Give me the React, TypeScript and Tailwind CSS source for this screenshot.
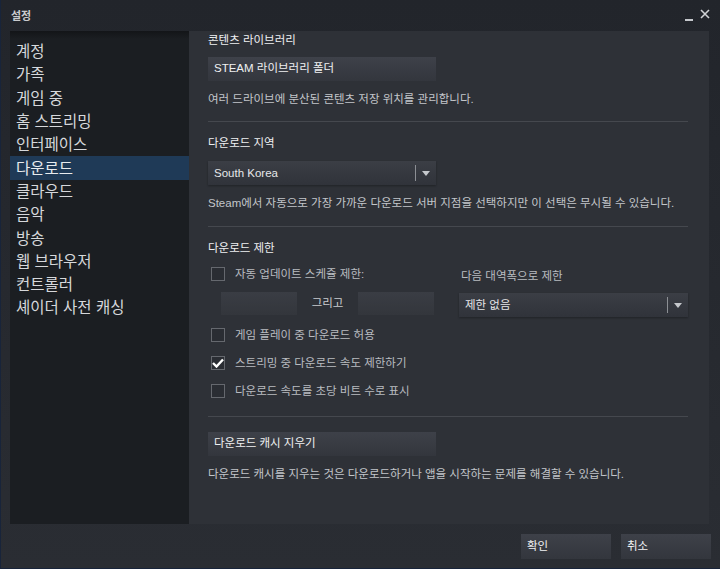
import React from "react";

const FONT = { fontFamily: '"Liberation Sans", "Noto Sans CJK KR", sans-serif' };

const navItems = [
  "계정",
  "가족",
  "게임 중",
  "홈 스트리밍",
  "인터페이스",
  "다운로드",
  "클라우드",
  "음악",
  "방송",
  "웹 브라우저",
  "컨트롤러",
  "셰이더 사전 캐싱",
];

function Arrow() {
  return (
    <svg width="8" height="5" viewBox="0 0 8 5" className="block">
      <path d="M0 0 L8 0 L4 5 Z" fill="#c5c8cc" />
    </svg>
  );
}

function Dropdown({ label, width }: { label: string; width: string }) {
  return (
    <div className={`${width} h-[24px] flex items-center bg-gradient-to-b from-[#3b3e45] to-[#30333a] shadow-[0_1px_2px_rgba(0,0,0,0.3)]`}>
      <span className="flex-1 pl-[6px] text-[11.5px] text-[#e6e7e9] leading-[24px]">{label}</span>
      <div className="w-px h-[16px] bg-[#8c8f94]" />
      <div className="w-[20px] flex justify-center">
        <Arrow />
      </div>
    </div>
  );
}

function Checkbox({ checked, label }: { checked?: boolean; label: string }) {
  return (
    <div className="flex items-center h-[18px] pl-[3px]">
      <div className="w-[14px] h-[14px] shrink-0 border border-[#65686e] bg-[#2a2d33] flex items-center justify-center">
        {checked && (
          <svg width="12" height="10" viewBox="0 0 12 10">
            <path d="M1 5 L4.5 8.5 L11 1.5" stroke="#ffffff" strokeWidth="2.4" fill="none" />
          </svg>
        )}
      </div>
      <span className="ml-[10px] text-[11.5px] text-[#b9bcc0] leading-[18px] whitespace-nowrap">{label}</span>
    </div>
  );
}

function Btn({ label, className = "" }: { label: string; className?: string }) {
  return (
    <div className={`h-[24px] flex items-center pl-[6px] bg-gradient-to-b from-[#3e4149] to-[#33363d] text-[11.5px] text-[#f0f1f2] ${className}`}>
      {label}
    </div>
  );
}

export default function App() {
  return (
    <div
      style={FONT}
      className="w-[720px] h-[569px] flex flex-col bg-gradient-to-b from-[#22252b] to-[#2a2d33] border-l border-b border-[#18243a] overflow-hidden"
    >
      {/* title bar */}
      <div className="h-[31px] flex items-center pl-[10px] pr-[10px] shrink-0">
        <span className="text-[11px] font-bold text-[#c9cbce] leading-[14px]">설정</span>
        <div className="flex-1" />
        <div className="flex items-center gap-[7px]">
          <div className="w-[8px] h-[2px] bg-[#c5c8cc] mt-[8px]" />
          <svg width="10" height="10" viewBox="0 0 10 10" className="-mt-[3px]">
            <path d="M1 1 L9 9 M9 1 L1 9" stroke="#d0d2d5" strokeWidth="1.6" />
          </svg>
        </div>
      </div>

      {/* main */}
      <div className="h-[493px] flex pl-[9px] pr-[11px] shrink-0">
        {/* sidebar */}
        <div className="w-[179px] shrink-0 bg-[#1b1e22] flex flex-col pt-[9px] relative">
          <div className="absolute top-0 left-0 right-0 h-[8px] bg-gradient-to-b from-[#131518] to-[#1b1e22]" />
          {navItems.map((n) => (
            <div
              key={n}
              className={`h-[23.3px] flex items-center pl-[6px] text-[15.5px] leading-[23px] relative whitespace-nowrap ${
                n === "다운로드" ? "bg-[#1f3a57] text-[#e8ebee]" : "text-[#d6d8db]"
              }`}
            >
              {n}
            </div>
          ))}
        </div>

        {/* content */}
        <div className="flex-1 min-w-0 bg-[#2e3137] flex flex-col pl-[19px] pr-[21px]">
          <div className="h-[18px] text-[11.5px] leading-[18px] text-[#eef0f2]">콘텐츠 라이브러리</div>
          <Btn label="STEAM 라이브러리 폴더" className="mt-[8px] w-[228px]" />
          <div className="mt-[9px] h-[18px] text-[11.5px] leading-[18px] text-[#c3c6ca] whitespace-nowrap">
            여러 드라이브에 분산된 콘텐츠 저장 위치를 관리합니다.
          </div>
          <div className="mt-[13px] h-px bg-[#45484e]" />

          <div className="mt-[12px] h-[18px] text-[11.5px] leading-[18px] text-[#eef0f2]">다운로드 지역</div>
          <div className="mt-[9px]">
            <Dropdown label="South Korea" width="w-[228px]" />
          </div>
          <div className="mt-[9px] h-[18px] text-[11.5px] leading-[18px] text-[#c3c6ca] whitespace-nowrap">
            Steam에서 자동으로 가장 가까운 다운로드 서버 지점을 선택하지만 이 선택은 무시될 수 있습니다.
          </div>
          <div className="mt-[14px] h-px bg-[#45484e]" />

          <div className="mt-[12px] h-[18px] text-[11.5px] leading-[18px] text-[#eef0f2]">다운로드 제한</div>
          <div className="mt-[8px] flex">
            <div className="w-[253px]">
              <Checkbox label="자동 업데이트 스케쥴 제한:" />
            </div>
            <div className="h-[18px] pt-[2px] text-[11.5px] leading-[18px] text-[#b9bcc0]">다음 대역폭으로 제한</div>
          </div>
          <div className="mt-[9px] flex items-start">
            <div className="w-[253px] flex items-center pl-[13px]">
              <div className="w-[76px] h-[23px] bg-gradient-to-b from-[#3a3d44] to-[#33363c]" />
              <div className="w-[61px] text-center text-[11.5px] text-[#c9cbce]">그리고</div>
              <div className="w-[76px] h-[23px] bg-gradient-to-b from-[#3a3d44] to-[#33363c]" />
            </div>
            <div className="mt-[1px]">
              <Dropdown label="제한 없음" width="w-[229px]" />
            </div>
          </div>
          <div className="mt-[9px]">
            <Checkbox label="게임 플레이 중 다운로드 허용" />
          </div>
          <div className="mt-[10px]">
            <Checkbox checked label="스트리밍 중 다운로드 속도 제한하기" />
          </div>
          <div className="mt-[10px]">
            <Checkbox label="다운로드 속도를 초당 비트 수로 표시" />
          </div>
          <div className="mt-[16px] h-px bg-[#45484e]" />

          <Btn label="다운로드 캐시 지우기" className="mt-[15px] w-[228px] h-[23px]" />
          <div className="mt-[9px] h-[18px] text-[11.5px] leading-[18px] text-[#c3c6ca] whitespace-nowrap">
            다운로드 캐시를 지우는 것은 다운로드하거나 앱을 시작하는 문제를 해결할 수 있습니다.
          </div>
        </div>
      </div>

      {/* footer */}
      <div className="flex justify-end gap-[10px] pr-[9px] pt-[10px]">
        <Btn label="확인" className="w-[90px] h-[25px]" />
        <Btn label="취소" className="w-[90px] h-[25px]" />
      </div>
    </div>
  );
}
